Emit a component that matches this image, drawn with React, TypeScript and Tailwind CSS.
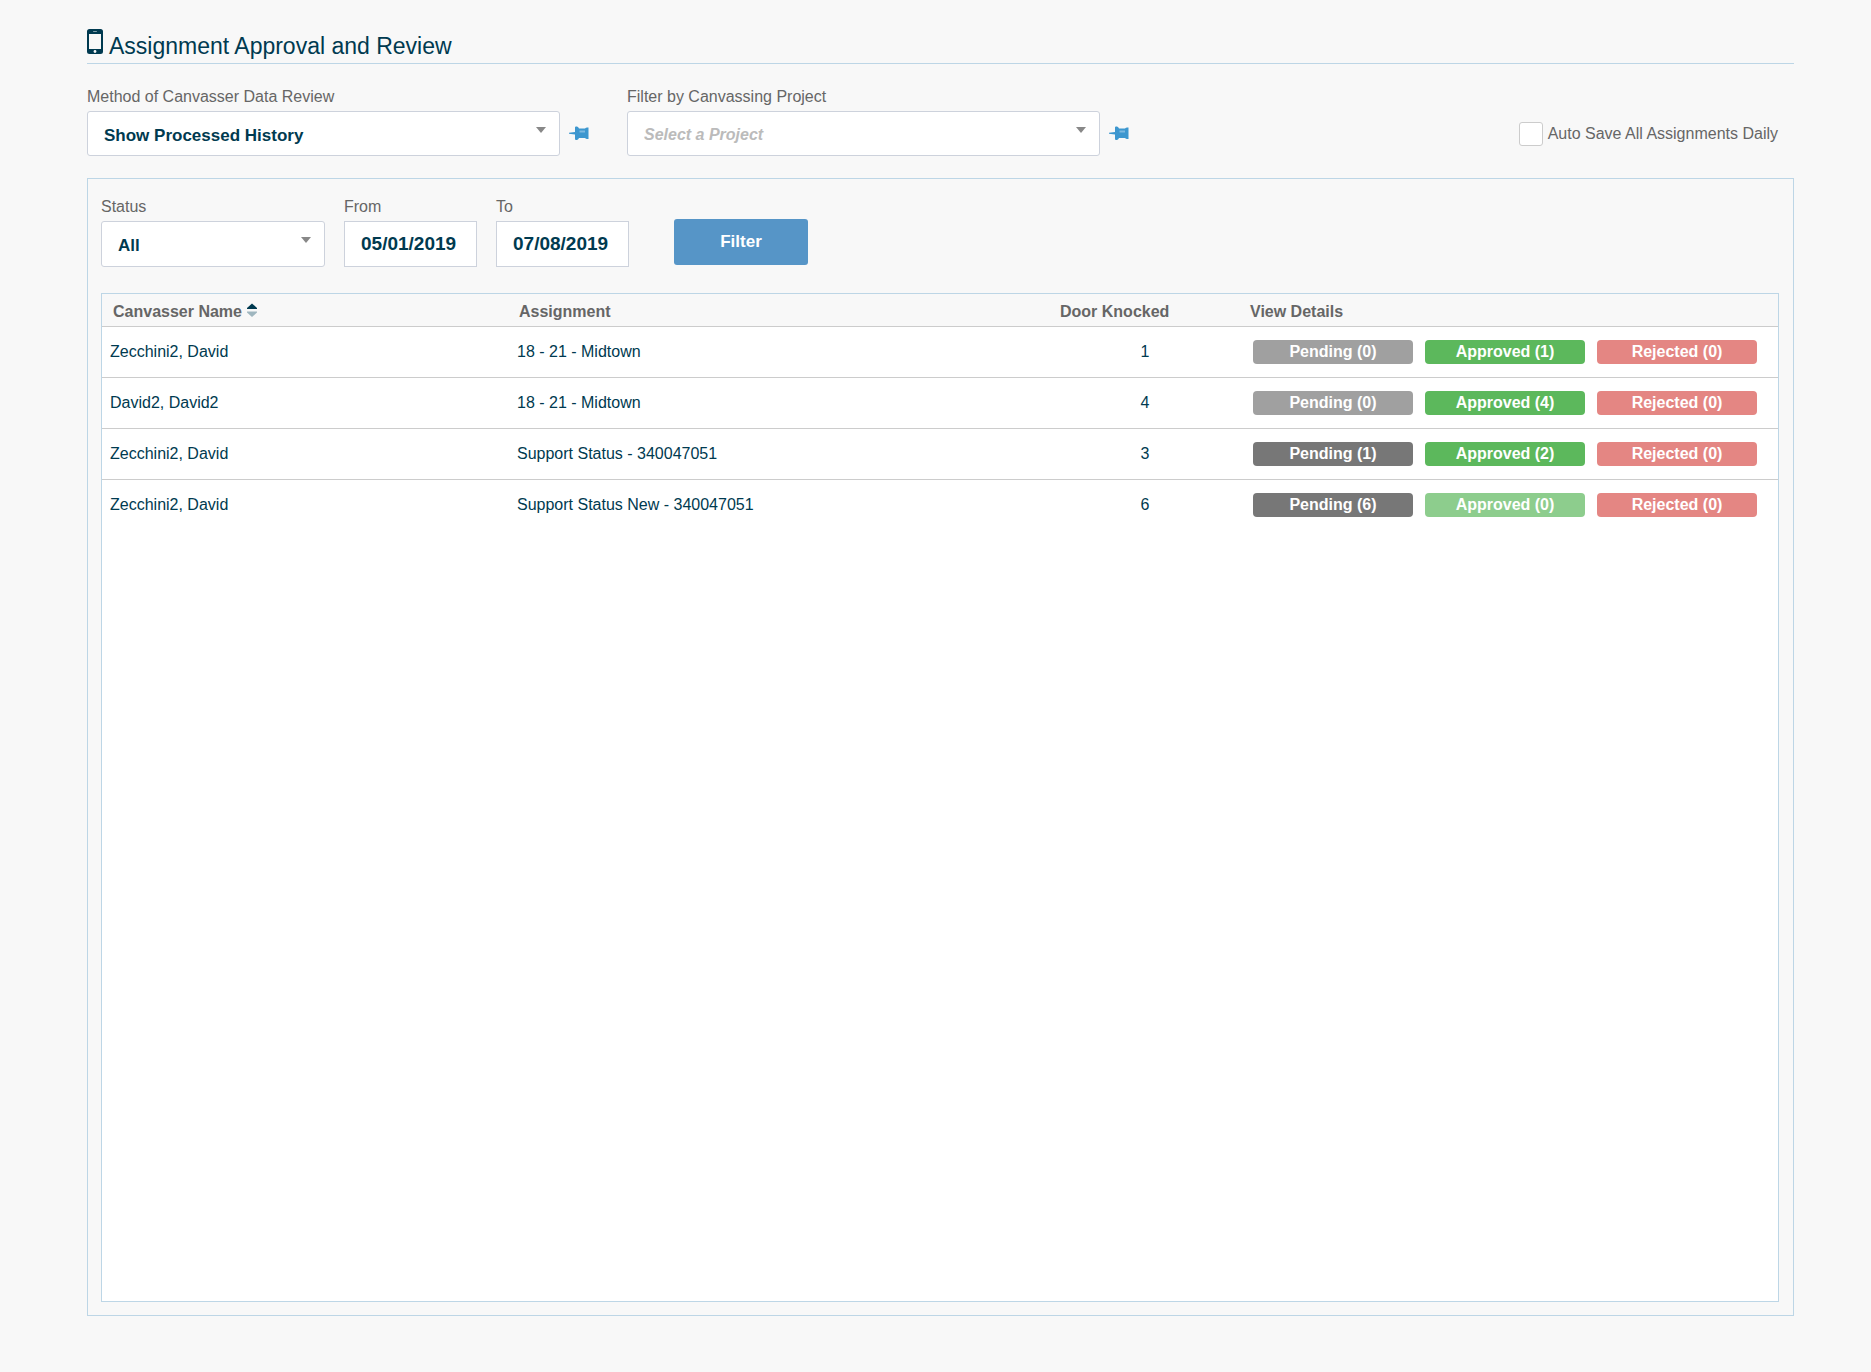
import { useState } from "react";
import clsx from "clsx";

interface Assignment {
  canvasser: string;
  name: string;
  doors: number;
  pending: number;
  approved: number;
  rejected: number;
}

const assignments: Assignment[] = [
  { canvasser: "Zecchini2, David", name: "18 - 21 - Midtown", doors: 1, pending: 0, approved: 1, rejected: 0 },
  { canvasser: "David2, David2", name: "18 - 21 - Midtown", doors: 4, pending: 0, approved: 4, rejected: 0 },
  { canvasser: "Zecchini2, David", name: "Support Status - 340047051", doors: 3, pending: 1, approved: 2, rejected: 0 },
  { canvasser: "Zecchini2, David", name: "Support Status New - 340047051", doors: 6, pending: 6, approved: 0, rejected: 0 },
];

function PhoneIcon() {
  return (
    <svg className="w-4 h-[25px]" viewBox="0 0 16 25" aria-hidden="true">
      <path
        fill="#003a50"
        fillRule="evenodd"
        d="M2.5 0h11A2.5 2.5 0 0 1 16 2.500v20A2.500 2.500 0 0 1 13.500 25h-11A2.500 2.500 0 0 1 0 22.500v-20A2.500 2.500 0 0 1 2.500 0ZM2 5v15h12V5Z"
      />
      <rect x="6" y="2" width="4" height="1" rx="0.500" fill="#7f9ca7" />
      <circle cx="8" cy="22.500" r="1.400" fill="#f8f8f8" />
    </svg>
  );
}

function PinIcon() {
  return (
    <svg className="w-5 h-[15px]" viewBox="0 0 20 15" aria-hidden="true">
      <path
        fill="#3d97cf"
        d="M0 6.800 6 6V1.500Q6 .5 7 .5h1Q9.500 1 10 2.500h6Q17 1.500 18 1.500h1.500v11.500H18q-1 0-2-1h-6Q9.500 13.700 8 14H7q-1 0-1-1V8.500L0 7.700Z"
      />
      <path fill="#7db9e0" d="M10.500 4.500h5.500v2h-5.500z" />
    </svg>
  );
}

interface SelectProps {
  id: string;
  label: string;
  options: string[];
  placeholder?: boolean;
  className: string;
}

function SelectField({ id, label, options, placeholder, className }: SelectProps) {
  return (
    <div>
      <label htmlFor={id} className="block pt-[1px] text-base leading-6">
        {label}
      </label>
      <div className="relative mt-[2px]">
        <select
          id={id}
          className={clsx(
            "block appearance-none rounded-[3px] border border-[#cdd2dc] bg-white pl-4 pr-10 font-bold",
            placeholder ? "pt-[2px] text-base italic text-[#bbbbbb]" : "pt-1 text-[17px] text-[#003a50]",
            className,
          )}
        >
          {options.map((option) => (
            <option key={option}>{option}</option>
          ))}
        </select>
        <svg
          className="pointer-events-none absolute right-[14px] top-4 w-[10px] h-[6px]"
          viewBox="0 0 10 6"
          aria-hidden="true"
        >
          <path d="M0 0h10L5 6Z" fill="#888888" />
        </svg>
      </div>
    </div>
  );
}

function DateField({ id, label, value }: { id: string; label: string; value: string }) {
  return (
    <div>
      <label htmlFor={id} className="block pt-[1px] text-base leading-6">
        {label}
      </label>
      <input
        id={id}
        type="text"
        defaultValue={value}
        className="mt-[2px] block h-[46px] w-[133px] border border-[#cdd2dc] bg-white px-4 text-[19px] font-bold text-[#003a50]"
      />
    </div>
  );
}

function StatusButton({ label, count, color }: { label: string; count: number; color: string }) {
  return (
    <button
      type="button"
      className={clsx("h-6 w-40 rounded text-base leading-6 font-bold text-white pb-[1px]", color)}
    >
      {label} ({count})
    </button>
  );
}

export default function App() {
  const [autoSave, setAutoSave] = useState(false);

  return (
    <div className="flex min-h-screen flex-col bg-[#f8f8f8] pt-7 pr-[77px] pb-14 pl-[87px] font-['Liberation_Sans',Arial,sans-serif] text-[#666666]">
      <header className="flex items-start gap-[6px] border-b border-[#bdd6e6] text-[#003a50]">
        <div className="pt-[1px]">
          <PhoneIcon />
        </div>
        <h1 className="pt-1 pb-[3px] text-[23px] leading-7">Assignment Approval and Review</h1>
      </header>

      <div className="mt-5 flex items-start">
        <SelectField
          id="method"
          label="Method of Canvasser Data Review"
          options={["Show Processed History"]}
          className="h-[45px] w-[473px]"
        />
        <button type="button" aria-label="Pin review method" className="mt-[42px] ml-[9px]">
          <PinIcon />
        </button>
        <div className="ml-[38px]">
          <SelectField
            id="project"
            label="Filter by Canvassing Project"
            options={["Select a Project"]}
            placeholder
            className="h-[45px] w-[473px]"
          />
        </div>
        <button type="button" aria-label="Pin project" className="mt-[42px] ml-[9px]">
          <PinIcon />
        </button>
        <label className="mt-[38px] mr-4 ml-auto flex items-center gap-[5px] text-base leading-6">
          <input
            type="checkbox"
            checked={autoSave}
            onChange={(e) => setAutoSave(e.target.checked)}
            className="size-6 appearance-none rounded-[3px] border border-[#cccccc] bg-white checked:bg-[#5695c7]"
          />
          Auto Save All Assignments Daily
        </label>
      </div>

      <main className="mt-[22px] flex flex-1 flex-col border border-[#bdd6e6] pt-[15px] pr-[14px] pb-[13px] pl-[13px]">
        <form className="flex items-start" onSubmit={(e) => e.preventDefault()}>
          <SelectField
            id="status"
            label="Status"
            options={["All", "Pending", "Approved", "Rejected"]}
            className="h-[46px] w-56"
          />
          <div className="ml-[19px] flex gap-[19px]">
            <DateField id="from" label="From" value="05/01/2019" />
            <DateField id="to" label="To" value="07/08/2019" />
          </div>
          <button
            type="submit"
            className="mt-[25px] ml-[45px] h-[46px] w-[134px] rounded-[3px] bg-[#5695c7] text-[17px] font-bold text-white"
          >
            Filter
          </button>
        </form>

        <div className="mt-[26px] flex-1 border border-[#bdd6e6] bg-white">
          <table className="w-full table-fixed border-collapse text-left text-base">
            <colgroup>
              <col className="w-[407px]" />
              <col />
              <col className="w-[190px]" />
              <col className="w-[538px]" />
            </colgroup>
            <thead className="bg-[#f8f8f8]">
              <tr className="h-8 border-b border-[#cccccc]">
                <th className="px-[11px] pt-[5px] pb-0">
                  <button type="button" className="flex items-center gap-[5px] font-bold">
                    Canvasser Name
                    <svg className="mb-1 h-[14px] w-[10px]" viewBox="0 0 10 14" aria-hidden="true">
                      <path d="M5 0.500 10 5V6H0V5Z" fill="#003a50" />
                      <path d="M0 8.500h10v1L5 14 0 9.500Z" fill="#9fb6bf" />
                    </svg>
                  </button>
                </th>
                <th className="px-[10px] pt-[5px] pb-0">Assignment</th>
                <th className="px-[10px] pt-[5px] pb-0">Door Knocked</th>
                <th className="px-[10px] pt-[5px] pb-0">View Details</th>
              </tr>
            </thead>
            <tbody className="text-[#003a50]">
              {assignments.map((row, i) => (
                <tr key={i} className="h-[51px] border-b border-[#cccccc] last:border-b-0">
                  <td className="px-2">{row.canvasser}</td>
                  <td className="px-2">{row.name}</td>
                  <td className="px-2 text-center">{row.doors}</td>
                  <td className="pl-[13px]">
                    <div className="flex gap-3">
                      <StatusButton
                        label="Pending"
                        count={row.pending}
                        color={row.pending > 0 ? "bg-[#777777]" : "bg-[#a0a0a0]"}
                      />
                      <StatusButton
                        label="Approved"
                        count={row.approved}
                        color={row.approved > 0 ? "bg-[#5cb85c]" : "bg-[#8dcd8d]"}
                      />
                      <StatusButton
                        label="Rejected"
                        count={row.rejected}
                        color={row.rejected > 0 ? "bg-[#d9534f]" : "bg-[#e48683]"}
                      />
                    </div>
                  </td>
                </tr>
              ))}
            </tbody>
          </table>
        </div>
      </main>
    </div>
  );
}
